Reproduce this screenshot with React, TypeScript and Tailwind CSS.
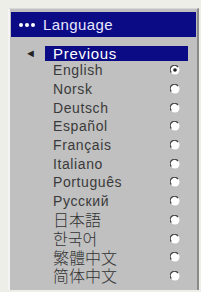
const LANGS: { label: string; cjk?: boolean; selected?: boolean }[] = [
  { label: 'English', selected: true },
  { label: 'Norsk' },
  { label: 'Deutsch' },
  { label: 'Español' },
  { label: 'Français' },
  { label: 'Italiano' },
  { label: 'Português' },
  { label: 'Русский' },
  { label: '日本語', cjk: true },
  { label: '한국어', cjk: true },
  { label: '繁體中文', cjk: true },
  { label: '简体中文', cjk: true },
];

function Radio({ on }: { on?: boolean }) {
  return (
    <svg width="10" height="10" viewBox="0 0 10 10" className="shrink-0">
      <circle cx="5" cy="5" r="4.5" fill="#ffffff" />
      <path d="M8 2 A4.2 4.2 0 0 0 1.2 7.5" stroke="#444" strokeWidth="1.3" fill="none" />
      {on && <circle cx="5" cy="5" r="1.8" fill="#222" />}
    </svg>
  );
}

export default function App() {
  return (
    <div className="h-[292px] w-[201px] overflow-hidden bg-[#eeeee8] pl-[8px] pt-[8px] font-['Liberation_Sans',Arial,sans-serif]">
      <div className="flex h-[282px] w-[191px] flex-col border-l-2 border-r-2 border-t border-l-[#f4f4f4] border-r-[#8a8a8a] border-t-[#d8d8d8] bg-[#c0c0c0] px-[1px] pt-[3px]">
        {/* Header */}
        <div className="flex h-[25px] items-center gap-[8px] bg-[#0b0b86] pl-[8px] text-white">
          <span className="flex gap-[2px]">
            <span className="h-[4px] w-[4px] rounded-full bg-white" />
            <span className="h-[4px] w-[4px] rounded-full bg-white" />
            <span className="h-[4px] w-[4px] rounded-full bg-white" />
          </span>
          <span className="text-[15px] leading-[17px] tracking-[0.4px] text-[#e8e8ff]">Language</span>
        </div>

        {/* Previous */}
        <div className="mt-[9px] flex h-[15px] items-center">
          <span className="ml-[14px] w-[20px] text-[11px] leading-[15px] text-[#222]">◄</span>
          <div className="h-[15px] w-[143px] bg-[#0b0b86] pl-[8px] text-[15px] leading-[15px] tracking-[0.7px] text-white">
            Previous
          </div>
        </div>

        {/* Languages */}
        <div className="flex flex-col">
          {LANGS.map((l) => (
            <div key={l.label} className="flex h-[18.7px] items-center pl-[42px] pr-[16px]">
              <span
                className={
                  l.cjk
                    ? "block flex-1 font-['Noto_Sans_CJK_JP','Noto_Sans_CJK_KR',sans-serif] text-[16px] font-light leading-[17px] text-[#333]"
                    : 'block flex-1 text-[14px] leading-[16px] tracking-[0.6px] text-[#3a3a3a]'
                }
              >
                {l.label}
              </span>
              <Radio on={l.selected} />
            </div>
          ))}
        </div>
      </div>
    </div>
  );
}
